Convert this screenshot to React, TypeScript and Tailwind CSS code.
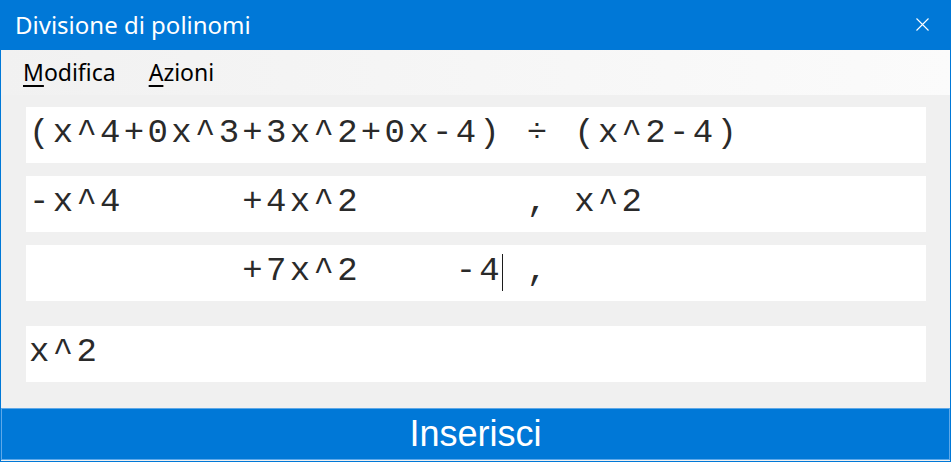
import React from 'react';

const mono = "font-['Liberation_Mono','DejaVu_Sans_Mono',monospace]";

function Field({ text, caret }: { text: string; caret?: number }) {
    return (
        <div className="relative h-[56px] w-[900px] bg-white">
            <div className={`${mono} whitespace-pre pl-[3px] text-[34px] leading-[52px] tracking-[3.3px] text-[#2a2a2a]`}>{text}</div>
            {caret !== undefined && (
                <div className="absolute top-[9px] h-[37px] w-px bg-[#1c1c1c]" style={{ left: caret }} />
            )}
        </div>
    );
}

export default function App() {
    return (
        <div className="flex h-[462px] w-[951px] flex-col border border-t-0 border-[#0078d7] bg-[#f0f0f0] font-['Noto_Sans',sans-serif]">
            <div className="flex h-[50px] shrink-0 items-center justify-between bg-[#0078d7] pl-[14px] pr-[21px] text-white">
                <span className="text-[24px] leading-none">Divisione di polinomi</span>
                <svg width="13" height="13" viewBox="0 0 13 13" className="mb-[1px]">
                    <path d="M0.5 0.5 L12.5 12.5 M12.5 0.5 L0.5 12.5" stroke="white" strokeWidth="1.1" fill="none" />
                </svg>
            </div>

            <div className="flex h-[45px] shrink-0 items-center gap-[33px] bg-gradient-to-r from-[#f1f1f1] to-[#fbfbfb] pl-[22px] text-[23px] text-black">
                <span>
                    <u className="underline-offset-[4px]">M</u>odifica
                </span>
                <span>
                    <u className="underline-offset-[4px]">A</u>zioni
                </span>
            </div>

            <div className="flex flex-1 flex-col pl-[25px] pt-[12px]">
                <Field text="(x^4+0x^3+3x^2+0x-4) ÷ (x^2-4)" />
                <div className="mt-[13px]">
                    <Field text="-x^4     +4x^2       , x^2" />
                </div>
                <div className="mt-[13px]">
                    <Field text="         +7x^2    -4 ," caret={476} />
                </div>
                <div className="mt-[25px]">
                    <Field text="x^2" />
                </div>
            </div>

            <button className="mb-[1px] flex h-[52px] shrink-0 items-center justify-center border border-[#5ea8e8] bg-[#0078d7] font-['Liberation_Sans',Arial,sans-serif] text-[36px] text-white">
                Inserisci
            </button>
        </div>
    );
}
